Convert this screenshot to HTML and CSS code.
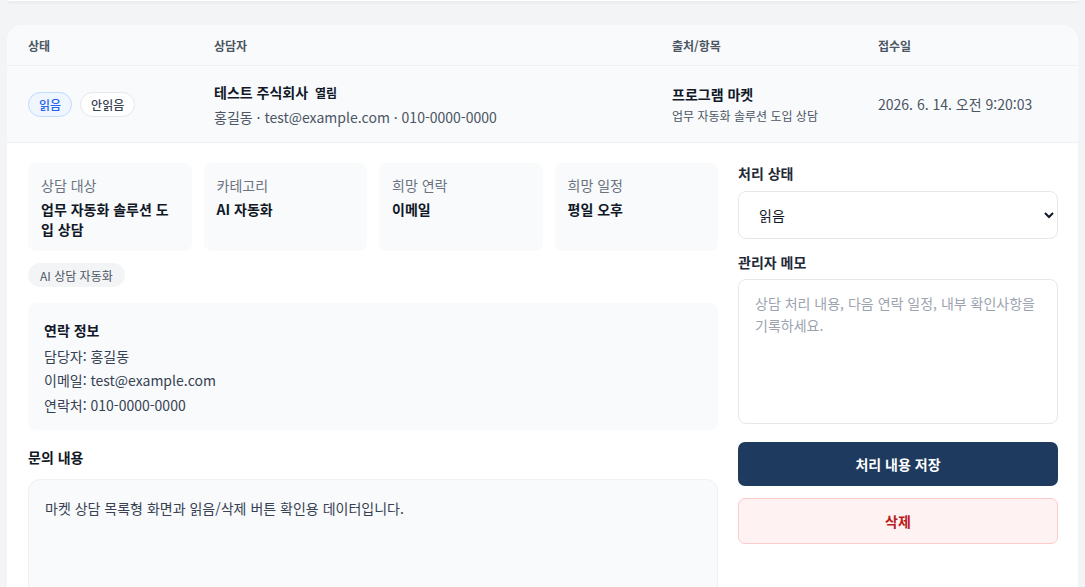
FILE: index.html
```html
<!DOCTYPE html>
<html lang="ko">
<head>
<meta charset="utf-8">
<link rel="stylesheet" href="styles.css">
</head>
<body>
<div class="topbar"></div>
<div class="card">
  <div class="thead">
    <div>상태</div>
    <div>상담자</div>
    <div>출처/항목</div>
    <div>접수일</div>
  </div>
  <div class="trow">
    <div class="badges">
      <span class="badge badge-read">읽음</span>
      <span class="badge badge-unread">안읽음</span>
    </div>
    <div class="person">
      <div class="company">테스트 주식회사 <span class="open">열림</span></div>
      <div class="contact-line">홍길동 · test@example.com · 010-0000-0000</div>
    </div>
    <div class="source">
      <div class="source-title">프로그램 마켓</div>
      <div class="source-sub">업무 자동화 솔루션 도입 상담</div>
    </div>
    <div class="date">2026. 6. 14. 오전 9:20:03</div>
  </div>
  <div class="detail">
    <div class="left">
      <div class="infos">
        <div class="info"><div class="info-label">상담 대상</div><div class="info-value">업무 자동화 솔루션 도입 상담</div></div>
        <div class="info"><div class="info-label">카테고리</div><div class="info-value">AI 자동화</div></div>
        <div class="info"><div class="info-label">희망 연락</div><div class="info-value">이메일</div></div>
        <div class="info"><div class="info-label">희망 일정</div><div class="info-value">평일 오후</div></div>
      </div>
      <div class="tags"><span class="tag">AI 상담 자동화</span></div>
      <div class="contact-box">
        <div class="box-title">연락 정보</div>
        <div class="line">담당자: 홍길동</div>
        <div class="line">이메일: test@example.com</div>
        <div class="line">연락처: 010-0000-0000</div>
      </div>
      <div class="section-title">문의 내용</div>
      <div class="message">마켓 상담 목록형 화면과 읽음/삭제 버튼 확인용 데이터입니다.</div>
    </div>
    <div class="right">
      <label class="field-label">처리 상태</label>
      <select class="select">
        <option>읽음</option>
        <option>안읽음</option>
      </select>
      <label class="field-label memo-label">관리자 메모</label>
      <textarea class="memo" placeholder="상담 처리 내용, 다음 연락 일정, 내부 확인사항을 기록하세요."></textarea>
      <button class="btn btn-save">처리 내용 저장</button>
      <button class="btn btn-delete">삭제</button>
    </div>
  </div>
</div>
</body>
</html>
```
FILE: styles.css
```css
* { box-sizing: border-box; }
html, body { margin: 0; padding: 0; }
body {
  background: #f3f4f6;
  font-family: "Noto Sans CJK KR", "Noto Sans", sans-serif;
  color: #111827;
  padding: 0 7px;
  overflow: hidden;
  height: 587px;
}
.topbar {
  height: 1px;
  background: #ffffff;
  box-shadow: 0 1px 3px rgba(0,0,0,0.12);
  border-radius: 0 0 12px 12px;
}
.card {
  margin-top: 24px;
  background: #ffffff;
  border-radius: 16px 16px 0 0;
  overflow: hidden;
  height: 562px;
}
.thead, .trow {
  display: grid;
  grid-template-columns: 186px 458px 206px 1fr;
  padding: 0 21px;
  align-items: center;
}
.thead {
  height: 41px;
  background: #f8fafc;
  border-bottom: 1px solid #eef0f3;
  font-size: 12px;
  font-weight: 700;
  color: #4b5563;
}
.trow {
  height: 77px;
  background: #f8fafc;
  border-bottom: 1px solid #eef0f3;
}
.badges { display: flex; gap: 8px; }
.badge {
  display: inline-flex;
  align-items: center;
  height: 25px;
  padding: 0 10px;
  border-radius: 999px;
  font-size: 12px;
  font-weight: 500;
}
.badge-read { background: #eff6ff; border: 1px solid #bfdbfe; color: #2563eb; }
.badge-unread { background: #ffffff; border: 1px solid #e5e7eb; color: #374151; }
.company { font-size: 14px; font-weight: 700; line-height: 20px; color: #111827; }
.open { font-size: 12px; font-weight: 600; margin-left: 3px; }
.contact-line { font-size: 14px; color: #4b5563; line-height: 20px; margin-top: 4px; }
.source-title { font-size: 14px; font-weight: 700; line-height: 20px; }
.source-sub { font-size: 12px; color: #4b5563; line-height: 16px; margin-top: 4px; }
.date { font-size: 14px; color: #4b5563; }

.detail {
  display: grid;
  grid-template-columns: 1fr 320px;
  gap: 20px;
  padding: 20px 20px 0 21px;
}
.infos {
  display: grid;
  grid-template-columns: repeat(4, 1fr);
  gap: 12px;
}
.info {
  background: #f8fafc;
  border-radius: 8px;
  padding: 12px 13px;
  min-height: 88px;
}
.info-label { font-size: 14px; color: #6b7280; line-height: 20px; margin-bottom: 4px; }
.info-value { font-size: 14px; font-weight: 700; line-height: 20px; color: #111827; }
.tags { margin-top: 12px; display: flex; }
.tag {
  display: inline-flex;
  align-items: center;
  height: 24px;
  padding: 0 12px;
  border-radius: 999px;
  background: #f3f4f6;
  font-size: 12px;
  color: #4b5563;
}
.contact-box {
  margin-top: 16px;
  background: #f8fafc;
  border-radius: 8px;
  padding: 16px 16px 13px;
}
.box-title { font-size: 14px; font-weight: 700; line-height: 22px; margin-bottom: 3px; }
.line { font-size: 14px; line-height: 24.4px; color: #374151; }
.section-title { margin-top: 16px; font-size: 14px; font-weight: 700; line-height: 22px; }
.message {
  margin-top: 11px;
  background: #f8fafc;
  border: 1px solid #eef1f5;
  border-radius: 12px;
  padding: 17px 16px;
  min-height: 180px;
  font-size: 14px;
  line-height: 22px;
  color: #374151;
}
.right { display: flex; flex-direction: column; }
.field-label { font-size: 14px; font-weight: 600; line-height: 20px; color: #1f2937; }
.select {
  margin-top: 8px;
  height: 48px;
  border: 1px solid #e5e7eb;
  border-radius: 8px;
  background: #ffffff;
  padding: 0 10px 0 16px;
  font-family: inherit;
  font-size: 14px;
  color: #111827;
}
.memo-label { margin-top: 13px; }
.memo {
  margin-top: 7px;
  height: 145px;
  border: 1px solid #e5e7eb;
  border-radius: 8px;
  padding: 12px 16px;
  font-family: inherit;
  font-size: 14px;
  line-height: 22px;
  resize: none;
  color: #111827;
}
.memo::placeholder { color: #9ca3af; }
.btn {
  font-family: inherit;
  font-size: 14px;
  font-weight: 700;
  border-radius: 7px;
  cursor: pointer;
}
.btn-save {
  margin-top: 18px;
  height: 44px;
  background: #1e3a5f;
  color: #ffffff;
  border: none;
}
.btn-delete {
  margin-top: 12px;
  height: 46px;
  background: #fef2f2;
  color: #b91c1c;
  border: 1px solid #fecaca;
}
```
